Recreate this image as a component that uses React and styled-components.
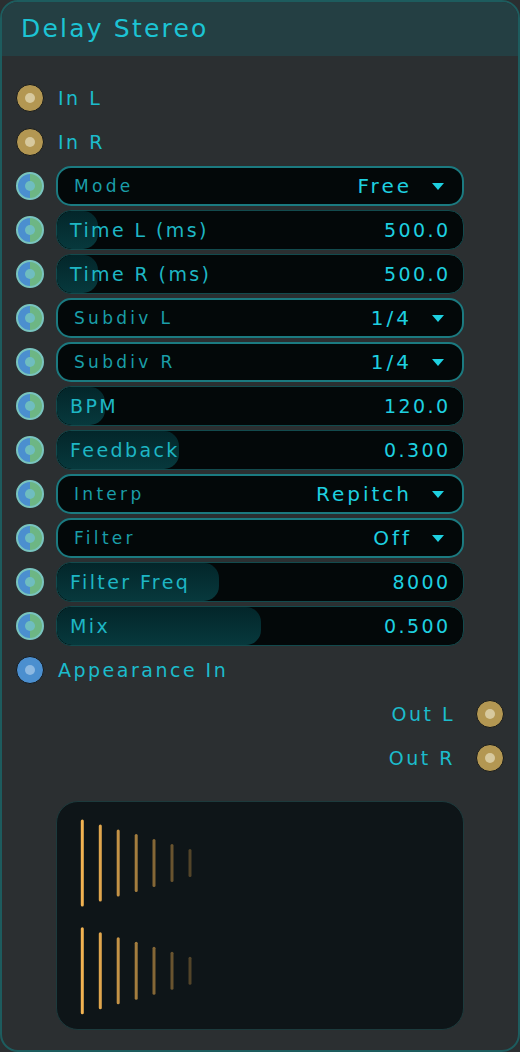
import React from "react";
import styled, { createGlobalStyle } from "styled-components";

const Global = createGlobalStyle`
  html, body { margin: 0; padding: 0; background: #2b2f31; }
  body { font-family: "DejaVu Sans", "Open Sans", sans-serif; }
  * { box-sizing: border-box; }
`;

const Card = styled.div`
  width: 520px;
  height: 1052px;
  border: 2px solid #1d5c5e;
  border-radius: 18px;
  overflow: hidden;
  background: #2b2f31;
  display: flex;
  flex-direction: column;
`;

const Header = styled.div`
  height: 54px;
  background: #243f43;
  display: flex;
  align-items: center;
  padding-left: 19px;
  color: #1cc4d4;
  font-size: 25px;
  letter-spacing: 2.2px;
  padding-bottom: 2px;
`;

const Body = styled.div`
  padding: 20px 14px 20px 14px;
  display: flex;
  flex-direction: column;
`;

const Row = styled.div`
  height: 44px;
  display: flex;
  align-items: center;
  justify-content: ${(p) => (p.$right ? "flex-end" : "flex-start")};
  gap: ${(p) => (p.$right ? "21px" : "12px")};
`;

const Socket = styled.div`
  width: 28px;
  height: 28px;
  flex: none;
  border-radius: 50%;
  display: flex;
  align-items: center;
  justify-content: center;
  border: ${(p) =>
    p.$kind === "split" ? "2px solid #79c4bf" : "1.5px solid #15191b"};
  background: ${(p) =>
    p.$kind === "gold"
      ? "#b39752"
      : p.$kind === "blue"
      ? "#4b8fcf"
      : "linear-gradient(90deg, #4b8fcf 0 50%, #6db684 50% 100%)"};
  &::after {
    content: "";
    width: 10px;
    height: 10px;
    border-radius: 50%;
    background: ${(p) =>
      p.$kind === "gold" ? "#d7c99e" : p.$kind === "blue" ? "#8db9e2" : "#6fbdc0"};
  }
`;

const PortLabel = styled.span`
  color: #1cbccc;
  font-size: 19px;
  letter-spacing: 2.5px;
  padding-left: ${(p) => (p.$right ? "0" : "2px")};
`;

const Control = styled.div`
  position: relative;
  width: 408px;
  height: 40px;
  flex: none;
  border-radius: 15px;
  background: #030809;
  border: ${(p) => (p.$drop ? "2px solid #1b7a80" : "1px solid #124a4d")};
  overflow: hidden;
  display: flex;
  align-items: center;
`;

const Fill = styled.div`
  position: absolute;
  left: 0;
  top: 0;
  bottom: 0;
  border-radius: 15px;
  background: linear-gradient(180deg, #03262a 0%, #07393d 100%);
`;

const SliderLabel = styled.span`
  position: relative;
  padding-left: 13px;
  color: #1eb6c4;
  font-size: 19px;
  letter-spacing: 2.4px;
  flex: 1;
`;

const SliderValue = styled.span`
  position: relative;
  padding-right: 12.5px;
  color: #1ed0e0;
  font-size: 19px;
  letter-spacing: 2.4px;
`;

const DropLabel = styled.span`
  padding-left: 16px;
  color: #1a9ea8;
  font-size: 17px;
  letter-spacing: 3.3px;
  flex: 1;
`;

const DropValue = styled.span`
  color: #1ed0e0;
  font-size: 20px;
  letter-spacing: 3px;
`;

const Caret = styled.span`
  width: 0;
  height: 0;
  margin: 0 18px 0 20px;
  border-left: 6px solid transparent;
  border-right: 6px solid transparent;
  border-top: 7px solid #1ed0e0;
`;

const Panel = styled.div`
  margin: 21px 0 0 40px;
  width: 408px;
  height: 229px;
  border-radius: 22px;
  background: #0e1518;
  border: 1px solid #1c3a3c;
  overflow: hidden;
`;

const rows = [
  { type: "in", label: "In L", kind: "gold" },
  { type: "in", label: "In R", kind: "gold" },
  { type: "drop", label: "Mode", value: "Free" },
  { type: "slider", label: "Time L (ms)", value: "500.0", fill: 41 },
  { type: "slider", label: "Time R (ms)", value: "500.0", fill: 41 },
  { type: "drop", label: "Subdiv L", value: "1/4" },
  { type: "drop", label: "Subdiv R", value: "1/4" },
  { type: "slider", label: "BPM", value: "120.0", fill: 48 },
  { type: "slider", label: "Feedback", value: "0.300", fill: 122 },
  { type: "drop", label: "Interp", value: "Repitch" },
  { type: "drop", label: "Filter", value: "Off" },
  { type: "slider", label: "Filter Freq", value: "8000", fill: 162 },
  { type: "slider", label: "Mix", value: "0.500", fill: 204 },
  { type: "in", label: "Appearance In", kind: "blue" },
];

const bars = [
  { x: 25.3, h: 42, o: 1 },
  { x: 43.3, h: 37, o: 0.92 },
  { x: 61.2, h: 32, o: 0.8 },
  { x: 79.2, h: 27.5, o: 0.66 },
  { x: 97, h: 22.5, o: 0.52 },
  { x: 115, h: 17.5, o: 0.4 },
  { x: 133, h: 12.5, o: 0.3 },
];

function Echoes() {
  return (
    <svg width="408" height="229" viewBox="0 0 408 229">
      {[61, 168.7].map((cy) =>
        bars.map((b, i) => (
          <line
            key={cy + "-" + i}
            x1={b.x}
            x2={b.x}
            y1={cy - b.h}
            y2={cy + b.h}
            stroke="#f2b352"
            strokeOpacity={b.o}
            strokeWidth="3"
            strokeLinecap="round"
          />
        ))
      )}
    </svg>
  );
}

export default function App() {
  return (
    <>
      <Global />
      <Card>
        <Header>Delay Stereo</Header>
        <Body>
          {rows.map((r) => {
            if (r.type === "in")
              return (
                <Row key={r.label}>
                  <Socket $kind={r.kind} />
                  <PortLabel>{r.label}</PortLabel>
                </Row>
              );
            if (r.type === "drop")
              return (
                <Row key={r.label}>
                  <Socket $kind="split" />
                  <Control $drop>
                    <DropLabel>{r.label}</DropLabel>
                    <DropValue>{r.value}</DropValue>
                    <Caret />
                  </Control>
                </Row>
              );
            return (
              <Row key={r.label}>
                <Socket $kind="split" />
                <Control>
                  <Fill style={{ width: r.fill + "px" }} />
                  <SliderLabel>{r.label}</SliderLabel>
                  <SliderValue>{r.value}</SliderValue>
                </Control>
              </Row>
            );
          })}
          <Row $right>
            <PortLabel $right>Out L</PortLabel>
            <Socket $kind="gold" />
          </Row>
          <Row $right>
            <PortLabel $right>Out R</PortLabel>
            <Socket $kind="gold" />
          </Row>
          <Panel>
            <Echoes />
          </Panel>
        </Body>
      </Card>
    </>
  );
}
